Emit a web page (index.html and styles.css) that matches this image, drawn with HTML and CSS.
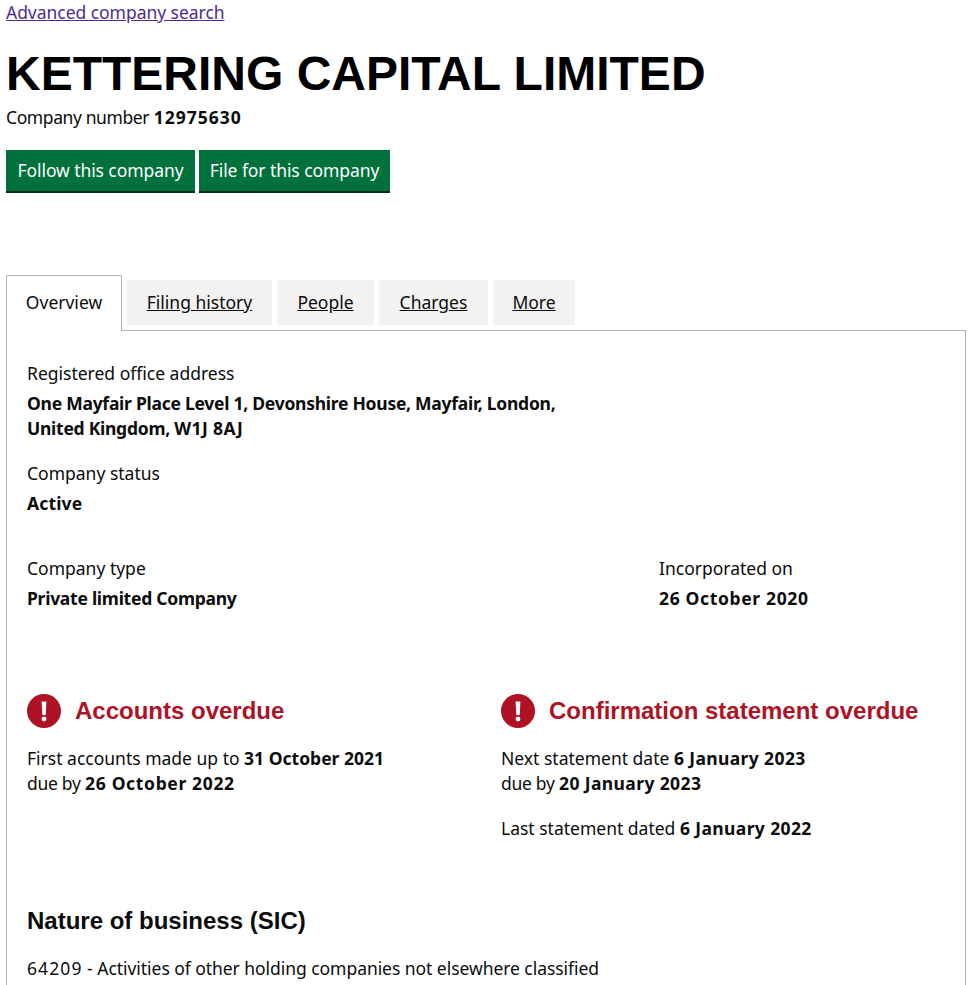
FILE: index.html
```html
<!DOCTYPE html>
<html lang="en">
<head>
<meta charset="utf-8">
<title>KETTERING CAPITAL LIMITED</title>
<link rel="stylesheet" href="styles.css">
</head>
<body>
<a class="search-link" href="#">Advanced company search</a>
<h1 class="company-name">KETTERING CAPITAL LIMITED</h1>
<p class="company-number"><span class="number-label">Company number</span> <strong class="digits">12975630</strong></p>
<div class="actions">
  <a class="button" href="#">Follow this company</a>
  <a class="button" href="#">File for this company</a>
</div>
<ul class="tabs">
  <li class="tab tab-active">Overview</li>
  <li class="tab"><a href="#">Filing history</a></li>
  <li class="tab"><a href="#">People</a></li>
  <li class="tab"><a href="#">Charges</a></li>
  <li class="tab"><a href="#">More</a></li>
</ul>
<main class="panel">
  <section class="field field-address">
    <div class="label">Registered office address</div>
    <div class="value">One Mayfair Place Level 1, Devonshire House, Mayfair, London,<br>United Kingdom, <span class="code">W1J 8AJ</span></div>
  </section>
  <section class="field field-status">
    <div class="label">Company status</div>
    <div class="value value-short">Active</div>
  </section>
  <section class="type-row">
    <div class="field">
      <div class="label">Company type</div>
      <div class="value">Private limited Company</div>
    </div>
    <div class="field">
      <div class="label">Incorporated on</div>
      <div class="value date">26 October 2020</div>
    </div>
  </section>
  <section class="overdue-row">
    <div>
      <h2 class="overdue-title">
        <svg class="alert-icon" viewBox="0 0 34 34" aria-hidden="true"><circle cx="17" cy="17" r="17" fill="#af1125"/><path d="M14.6 7.5h4.8l-.7 13.5h-3.4z" fill="#fff"/><circle cx="17" cy="25" r="2.4" fill="#fff"/></svg>
        Accounts overdue
      </h2>
      <p class="text">First accounts made up to <strong>31 October 2021</strong><br><span class="due">due by</span> <strong class="date">26 October 2022</strong></p>
    </div>
    <div>
      <h2 class="overdue-title">
        <svg class="alert-icon" viewBox="0 0 34 34" aria-hidden="true"><circle cx="17" cy="17" r="17" fill="#af1125"/><path d="M14.6 7.5h4.8l-.7 13.5h-3.4z" fill="#fff"/><circle cx="17" cy="25" r="2.4" fill="#fff"/></svg>
        Confirmation statement overdue
      </h2>
      <p class="text">Next statement date <strong class="date-mid">6 January 2023</strong><br><span class="due">due by</span> <strong class="date-mid">20 January 2023</strong></p>
      <p class="text text-last">Last statement dated <strong class="date-mid">6 January 2022</strong></p>
    </div>
  </section>
  <h2 class="sic-title">Nature of business (SIC)</h2>
  <p class="text"><span class="sic-code">64209</span> - <span class="sic-name">Activities of other holding companies not elsewhere classified</span></p>
</main>
</body>
</html>
```
FILE: styles.css
```css
html, body { margin: 0; padding: 0; }
html { background: #fff; }
body {
  height: 985px;
  overflow: hidden;
  padding: 0 10px 0 6px;
  box-sizing: border-box;
  font-family: "Noto Sans", "Liberation Sans", sans-serif;
  font-size: 17.5px;
  line-height: 25px;
  color: #0b0c0c;
}
.search-link { color: #4c2c92; display: block; height: 25px; letter-spacing: -0.04px; }
.company-name {
  font-family: "Liberation Sans", Arial, sans-serif;
  font-weight: 700;
  font-size: 48px;
  line-height: 50px;
  color: #000;
  margin: 24px 0 0;
}
.company-number { margin: 6px 0 0; }
.number-label { letter-spacing: -0.4px; }
.digits { letter-spacing: 1px; }
strong { font-weight: 700; }
.actions { display: grid; grid-template-columns: 189px 191px; gap: 4px; margin-top: 20px; }
.button {
  display: block;
  background: #00703c;
  color: #fff;
  text-decoration: none;
  text-align: center;
  letter-spacing: -0.08px;
  padding: 8px 0;
  height: 25px;
  border-bottom: 2px solid #002d18;
}
.tabs {
  display: grid;
  grid-template-columns: 116px 145px 97px 109px 82px;
  list-style: none;
  margin: 82px 0 0;
  padding: 0;
  align-items: start;
  gap: 5px;
  height: 55px;
}
.tab {
  background: #f3f2f1;
  margin-top: 5px;
  height: 45px;
  line-height: 45px;
  text-align: center;
}
.tab a { color: #0b0c0c; }
.tab-active {
  background: #fff;
  border: 1px solid #b1b4b6;
  border-bottom: 0;
  margin-top: 0;
  height: 56px;
  line-height: 53px;
  box-sizing: border-box;
  position: relative;
  z-index: 1;
}
.panel {
  border: 1px solid #b1b4b6;
  padding: 30px 20px 0;
  height: 700px;
  box-sizing: border-box;
}
.label { margin-bottom: 5px; }
.value { font-weight: 700; letter-spacing: -0.26px; }
.value-short { letter-spacing: 0.15px; }
.value.date, .date { letter-spacing: 0.65px; }
.date-mid { letter-spacing: 0.38px; }
.code { letter-spacing: 0.4px; }
.due { letter-spacing: -0.3px; }
.sic-code { letter-spacing: 1.1px; }
.sic-name { letter-spacing: -0.05px; }
.field-address { margin-bottom: 20px; }
.field-status { margin-bottom: 40px; }
.type-row { display: grid; grid-template-columns: 632px 1fr; }
.overdue-row { display: grid; grid-template-columns: 474px 1fr; margin-top: 83px; }
.overdue-title {
  display: flex;
  align-items: center;
  gap: 14px;
  margin: 0 0 18px;
  font-family: "Liberation Sans", Arial, sans-serif;
  font-size: 24px;
  line-height: 34px;
  color: #af1125;
  font-weight: 700;
}
.alert-icon { width: 34px; height: 34px; flex: none; }
.text { margin: 0; }
.text-last { margin-top: 20px; }
.sic-title {
  font-family: "Liberation Sans", Arial, sans-serif;
  font-size: 24px;
  line-height: 30px;
  color: #0b0c0c;
  margin: 65px 0 20px;
}
```
